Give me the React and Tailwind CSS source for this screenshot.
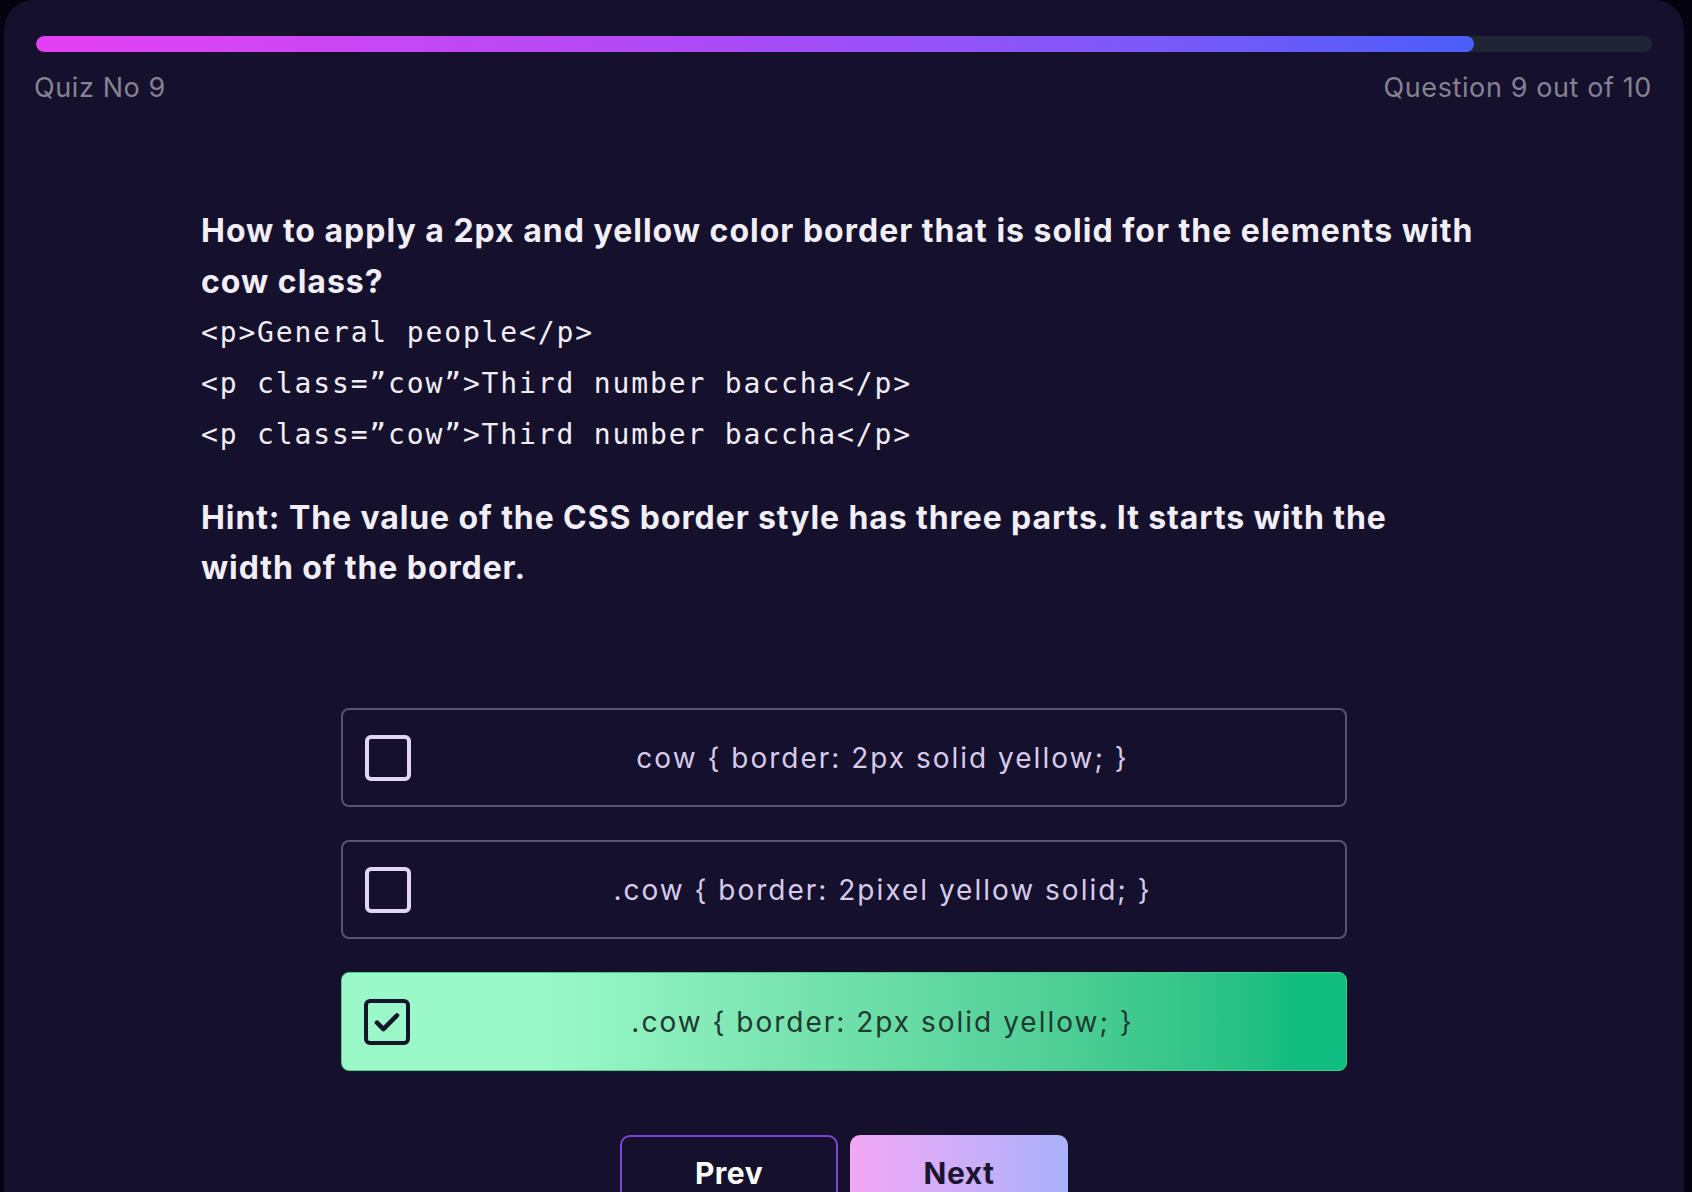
import { useState } from 'react';

const options = [
  { id: 1, text: 'cow { border: 2px solid yellow; }' },
  { id: 2, text: '.cow { border: 2pixel yellow solid; }' },
  { id: 3, text: '.cow { border: 2px solid yellow; }' },
];

const codeLines = [
  '<p>General people</p>',
  '<p class=”cow”>Third number baccha</p>',
  '<p class=”cow”>Third number baccha</p>',
];

function CheckBox({ checked }) {
  if (checked) {
    return (
      <div className="w-[46px] h-[46px] shrink-0 rounded-[6px] border-[4px] border-[#16152a] flex items-center justify-center">
        <svg width="32" height="32" viewBox="0 0 24 24" fill="none">
          <path d="M4.5 12.5l4.8 4.8L19.5 7" stroke="#16152a" strokeWidth="3.4" strokeLinecap="round" strokeLinejoin="round" />
        </svg>
      </div>
    );
  }
  return <div className="w-[46px] h-[46px] shrink-0 rounded-[6px] border-[4px] border-[#e2d5f6]" />;
}

export default function App() {
  const [selected, setSelected] = useState(3);
  const current = 9;
  const total = 10;

  return (
    <div className="min-h-screen bg-[#05040e] pl-1 pr-2" style={{ fontFamily: 'Inter, "Noto Sans", sans-serif' }}>
      <div className="min-h-[1192px] bg-[#15102c] rounded-t-[30px] px-8 pt-9">
        {/* Progress */}
        <div className="h-4 rounded-full bg-[#1e2535] overflow-hidden">
          <div
            className="h-full rounded-full bg-gradient-to-r from-[#e33ff2] via-[#a84bf6] to-[#4a5ef9]"
            style={{ width: `${(current / total) * 100 - 1}%` }}
          ></div>
        </div>
        <div className="flex justify-between mt-5 text-[27px] leading-8 text-[#858293] tracking-[0.6px]">
          <span className="-ml-[2px]">Quiz No {current}</span>
          <span>Question {current} out of {total}</span>
        </div>

        {/* Question */}
        <div className="mt-[101px] pl-[165px] text-[#f1eef7]">
          <div className="text-[32px] font-bold leading-[51px] tracking-[1px]">
            <div>How to apply a 2px and yellow color border that is solid for the elements with</div>
            <div>cow class?</div>
          </div>
          <div className="text-[28px] leading-[51px] tracking-[1.85px]" style={{ fontFamily: '"DejaVu Sans Mono", monospace' }}>
            {codeLines.map((line, i) => (
              <div key={i}>{line}</div>
            ))}
          </div>
          <div className="mt-[33px] text-[32px] font-bold leading-[50px] tracking-[0.9px]">
            <div>Hint: The value of the CSS border style has three parts. It starts with the</div>
            <div>width of the border.</div>
          </div>
        </div>

        {/* Options */}
        <div className="mt-[115px] w-[1006px] mx-auto flex flex-col gap-[33px]">
          {options.map((opt) => {
            const active = opt.id === selected;
            return (
              <button
                key={opt.id}
                onClick={() => setSelected(opt.id)}
                className={
                  active
                    ? 'h-[99px] flex items-center rounded-[8px] border border-[#48cc88] bg-gradient-to-r from-[#9af8c9] from-20% to-[#10bc7f] to-95%'
                    : 'h-[99px] flex items-center rounded-[8px] border-2 border-[#5a5370]'
                }
              >
                <div className="ml-[22px]">
                  <CheckBox checked={active} />
                </div>
                <span
                  className={
                    active
                      ? 'flex-1 ml-[33px] pr-6 text-center text-[28px] tracking-[2px] text-[#20392f]'
                      : 'flex-1 ml-[33px] pr-6 text-center text-[28px] tracking-[2px] text-[#d6cbec]'
                  }
                >
                  {opt.text}
                </span>
              </button>
            );
          })}
        </div>

        {/* Nav */}
        <div className="mt-16 flex justify-center gap-3">
          <button className="w-[218px] h-[72px] rounded-[10px] border-2 border-[#7b46d8] text-white text-[30px] font-bold tracking-[0.5px] pt-[4px]">
            Prev
          </button>
          <button className="w-[218px] h-[72px] rounded-[10px] bg-gradient-to-r from-[#f2a8f6] to-[#a8b1fb] text-[#1a1530] text-[30px] font-bold tracking-[0.5px] pt-[4px]">
            Next
          </button>
        </div>
      </div>
    </div>
  );
}
